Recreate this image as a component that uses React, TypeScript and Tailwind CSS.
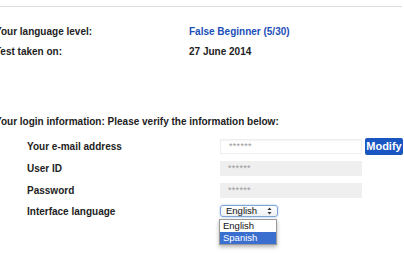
import React from "react";

function Arrows() {
  return (
    <svg width="5" height="8" viewBox="0 0 5 8" className="shrink-0">
      <path d="M0.5 3 L2.5 0.5 L4.5 3 Z" fill="#333" />
      <path d="M0.5 5 L2.5 7.5 L4.5 5 Z" fill="#333" />
    </svg>
  );
}

export default function App() {
  const font = { fontFamily: '"Liberation Sans", Arial, Helvetica, sans-serif' };
  return (
    <div
      className="w-[404px] h-[254px] overflow-hidden bg-white text-[#222] font-bold text-[10px] leading-none"
      style={font}
    >
      <div className="mt-[6px] h-px w-[402px] bg-[#dcdcdc]" />
      <div className="ml-[-5px] mt-[20px] flex flex-col gap-[10px]">
        <div className="flex items-center h-[10px]">
          <div className="w-[194px]">Your language level:</div>
          <div className="text-[#1b4fb8]">False Beginner (5/30)</div>
        </div>
        <div className="flex items-center h-[10px]">
          <div className="w-[194px]">Test taken on:</div>
          <div>27 June 2014</div>
        </div>
      </div>
      <div className="ml-[-5px] mt-[60px] h-[10px] flex items-center">
        Your login information: Please verify the information below:
      </div>
      <div className="mt-[12px] flex flex-col gap-[7px] pl-[27px]">
        <div className="flex items-center h-[15px]">
          <div className="w-[193px]">Your e-mail address</div>
          <div className="w-[142px] h-[15px] bg-white border border-[#eeeeee] shadow-[inset_0_1px_1px_rgba(0,0,0,0.04)] flex items-center pl-[8px] text-[#999] font-normal text-[9px] tracking-[0.3px]">
            ******
          </div>
          <button className="ml-[3px] w-[38px] h-[17px] rounded-[2px] bg-[#1a56c2] text-white font-bold text-[11px] flex items-center justify-center">
            Modify
          </button>
        </div>
        <div className="flex items-center h-[15px]">
          <div className="w-[193px]">User ID</div>
          <div className="w-[142px] h-[15px] bg-[#efefef] flex items-center pl-[8px] text-[#999] font-normal text-[9px] tracking-[0.3px]">
            ******
          </div>
        </div>
        <div className="flex items-center h-[15px]">
          <div className="w-[193px]">Password</div>
          <div className="w-[142px] h-[15px] bg-[#efefef] flex items-center pl-[8px] text-[#999] font-normal text-[9px] tracking-[0.3px]">
            ******
          </div>
        </div>
        <div className="flex items-start h-[15px]">
          <div className="w-[193px] mt-[2px]">Interface language</div>
          <div className="relative">
            <div className="w-[58px] h-[12px] rounded-[3px] border border-[#7fa4d8] shadow-[0_0_2px_#8fb4ea] bg-gradient-to-b from-white to-[#eef0f3] flex items-center pl-[5px] pr-[5px] text-[9.5px] font-normal text-[#111]">
              <span className="flex-1">English</span>
              <Arrows />
            </div>
            <div className="absolute left-[-1px] top-[14px] w-[58px] border border-[#9a9a9a] bg-white shadow-[0_2px_4px_rgba(0,0,0,0.3)] text-[9.5px] font-normal">
              <div className="h-[12px] flex items-center pl-[3px] text-[#111]">English</div>
              <div className="h-[12px] flex items-center pl-[3px] bg-[#3a6fd0] text-white">Spanish</div>
            </div>
          </div>
        </div>
      </div>
    </div>
  );
}
